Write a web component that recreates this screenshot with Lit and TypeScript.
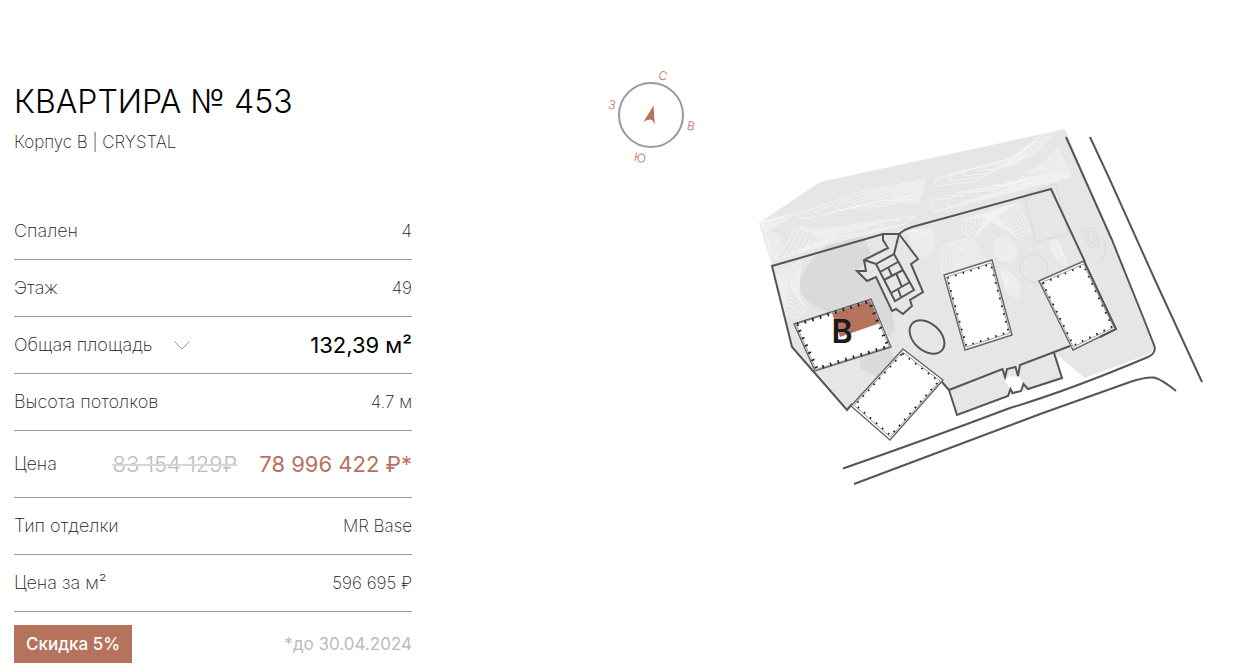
import { LitElement, html, svg, css } from "lit";
import { customElement, state } from "lit/decorators.js";

type Pt = [number, number];

const pts = (list: Pt[]) => list.map(([x, y]) => `${x.toFixed(1)},${y.toFixed(1)}`).join(" ");

/** Moves every point of an outline toward a focus by the given share. */
const toward = (list: Pt[], [fx, fy]: Pt, k: number): Pt[] =>
  list.map(([x, y]) => [fx + (x - fx) * k, fy + (y - fy) * k]);

/** Moves every point of a convex outline inwards by about d pixels. */
const inset = (list: Pt[], d: number): Pt[] => {
  const cx = list.reduce((s, p) => s + p[0], 0) / list.length;
  const cy = list.reduce((s, p) => s + p[1], 0) / list.length;
  return list.map(([x, y]) => {
    const len = Math.hypot(x - cx, y - cy);
    return [x - ((x - cx) / len) * d, y - ((y - cy) / len) * d];
  });
};

const BUILDING_B: Pt[] = [[794, 324], [871, 299], [891, 347], [815, 371]];
const BUILDINGS: Pt[][] = [
  [[903, 349], [943, 380], [890, 440], [851, 406]],
  [[944, 275], [992, 260], [1012, 335], [965, 350]],
  [[1039, 281], [1084, 261], [1116, 329], [1073, 350]],
];

const CONTOURS: { line: Pt[]; focus: Pt; rings: number }[] = [
  { line: [[935, 180], [955, 173], [1003, 162], [1022, 150], [1042, 135], [1054, 133], [1041, 148], [1030, 157], [1022, 158], [1015, 165], [995, 169], [975, 182], [960, 183], [936, 186]], focus: [1020, 156], rings: 6 },
  { line: [[931, 199], [950, 199], [960, 192], [990, 191], [1020, 180], [1026, 172], [1040, 166], [1058, 147], [1071, 177], [933, 212]], focus: [1054, 172], rings: 8 },
  { line: [[795, 215], [860, 192], [926, 179], [918, 203], [900, 202], [875, 208], [850, 208], [805, 219]], focus: [912, 193], rings: 6 },
  { line: [[760, 222], [795, 213], [788, 219], [764, 232]], focus: [765, 224], rings: 5 },
  { line: [[783, 250], [795, 227], [820, 230], [852, 225], [915, 216], [905, 224], [860, 236], [812, 249], [775, 260]], focus: [822, 239], rings: 6 },
  { line: [[764, 230], [778, 235], [783, 247], [771, 263]], focus: [772, 246], rings: 5 },
  { line: [[776, 272], [801, 262], [798, 295], [806, 309], [797, 318], [785, 314]], focus: [789, 284], rings: 7 },
  { line: [[908, 231], [934, 228], [933, 247], [925, 258], [915, 252]], focus: [922, 239], rings: 6 },
  { line: [[944, 245], [965, 239], [975, 242], [980, 252], [990, 266], [944, 278], [939, 258]], focus: [962, 255], rings: 7 },
  { line: [[962, 220], [1018, 203], [1030, 232], [1018, 238], [1008, 231], [986, 218], [974, 239], [962, 232]], focus: [996, 216], rings: 8 },
  { line: [[995, 240], [1008, 238], [1017, 251], [1013, 261], [1000, 261], [995, 252]], focus: [1006, 252], rings: 6 },
  { line: [[1000, 268], [1005, 267], [1020, 284], [1018, 298], [1007, 293]], focus: [1010, 282], rings: 6 },
  { line: [[1050, 241], [1057, 239], [1066, 259], [1067, 265], [1058, 262], [1051, 250]], focus: [1058, 252], rings: 5 },
];

@customElement("compass-rose")
class CompassRose extends LitElement {
  static styles = css`
    :host { display: block; }
    svg { display: block; width: 100%; height: auto; }
    .ring { fill: none; stroke: #999; stroke-width: 2; }
    .needle { fill: #b5725c; }
    text { fill: #b5725c; font: 300 12px Inter, sans-serif; text-anchor: middle; }
  `;
  render() {
    return html`
      <svg viewBox="604 66 96 102" role="img" aria-label="Стороны света">
        <circle class="ring" cx="651" cy="115" r="32"></circle>
        <path class="needle" d="M653.5 105.5 654.8 125.3Q653.5 120 650.3 119.5 646 119.5 643.3 122.3Z"></path>
        <text transform="translate(662 80) rotate(12)">С</text>
        <text transform="translate(611 109) rotate(12)">З</text>
        <text transform="translate(690 130) rotate(12)">В</text>
        <text transform="translate(639 162) rotate(12)">Ю</text>
      </svg>`;
  }
}

@customElement("site-plan")
class SitePlan extends LitElement {
  static styles = css`
    :host { display: block; }
    svg { display: block; width: 100%; height: auto; }
    .ground { fill: #e6e6e6; }
    .shade { fill: #dadada; }
    .contour { fill: none; stroke: #f4f4f4; stroke-width: 0.9; stroke-linejoin: round; }
    .court { fill: none; stroke: #dadada; stroke-width: 1; }
    .line { fill: none; stroke: #555; stroke-width: 2; stroke-linejoin: miter; }
    .road { fill: none; stroke: #555; stroke-width: 2; }
    .house { fill: #fff; stroke: #666; stroke-width: 1.4; }
    .wall { fill: none; stroke: #888; stroke-width: 0.8; }
    .teeth { fill: none; stroke: #222; stroke-width: 1.8; stroke-dasharray: 1.6 6.4; }
    .teeth.strong { stroke-dasharray: 1.6 6.4; stroke-width: 3.4; }
    .flat { fill: #b5725c; }
    .clear { fill: #fff; }
    text { fill: #1a1a1a; font: 600 32px Inter, sans-serif; text-anchor: middle; }
  `;
  render() {
    return html`
      <svg viewBox="755 125 450 362" role="img" aria-label="План участка, корпус B">
        <path class="ground" d="M759 223 820 182 1065 129 1112 240 1141 314 1153 345Q1154 352 1147 355L1085 378 1057 355 1062 378 957 414 949 390 942 382 890 430 850 405 847 410 792 347 772 266Z"></path>
        <path class="shade" d="M829 242 862 231 871 254 864 261 858 271 867 281 876 279 892 312 895 330 889 337 871 299 827 312 811 304 801 294 800 280 806 267Z"></path>
        <path class="shade" d="M860 352 889 347 895 358 878 378 860 368Z"></path>
        ${CONTOURS.map(({ line, focus, rings }) =>
          Array.from({ length: rings }, (_, i) =>
            svg`<polygon class="contour" points=${pts(toward(line, focus, 1 - i / rings))}></polygon>`))}
        <path class="court" d="M1024 195 1056 184 1069 234 1036 242ZM1083 230 1093 227 1100 244 1090 248ZM1087 233 1092 231 1096 242 1091 244ZM1100 262Q1110 250 1103 238"></path>
        <circle class="court" cx="1034" cy="268" r="14"></circle>
        <path class="clear" d="M1004 380 1010 376 1019 377 1023 383 1021 391 1012 393 1009 387Z"></path>
        <path class="clear" d="M903 349 890 440 942 381Z"></path>

        <path class="line" d="M852 404 847 410 792 347 772 266 883 234H899Q905 229 912 227L1051 189 1085 262"></path>
        <path class="line" d="M883 234V240L888 248 864 260 866 271H857L867 281 876 277 892 311 896 309 903 314 912 306 910 300 923 292 911 264 918 259 899 234"></path>
        <path class="line" d="M864 260 876 264 894 254 899 234M876 264 895 301 914 290 894 254M880 272 898 262M884 280 903 270M891 293 910 282M888 267 892 276M896 273 902 287M898 289 901 297"></path>
        <ellipse class="line" cx="927" cy="337" rx="20" ry="13.5" transform="rotate(42 927 337)"></ellipse>
        <path class="line" d="M1070 346 1020 365 1018 376 1015.500 367 1007 369 1005 377 1002.500 369 949 390 942 382"></path>
        <path class="line" d="M949 390 957 415 1008 396 1010.500 389 1012.500 393 1021 391 1023.500 384 1028 389 1062 378 1054 353"></path>

        ${BUILDINGS.map((b) => svg`
          <polygon class="house" points=${pts(b)}></polygon>
          <polygon class="wall" points=${pts(inset(b, 3))}></polygon>
          <polygon class="teeth" points=${pts(inset(b, 4.5))}></polygon>`)}
        <path class="line" d="M1084 261 1116 329 1100 337"></path>

        <polygon class="house" points=${pts(BUILDING_B)}></polygon>
        <path class="flat" d="M832 313 870.500 300.500 880 323 840 337Z"></path>
        <polygon class="wall" points=${pts(inset(BUILDING_B, 2))}></polygon>
        <polygon class="teeth strong" points=${pts(inset(BUILDING_B, 3))}></polygon>
        <text x="842" y="343">B</text>

        <path class="road" d="M1066 137 1112 240 1143 317 1154 345Q1157 353 1148 357 1070 390 1010 408 925 440 843 468.500"></path>
        <path class="road" d="M854 484 1043 413 1130 382Q1145 377 1153 377.500 1160 378 1176 391"></path>
        <path class="road" d="M1090 137 1110 180 1155 280 1202 382"></path>
      </svg>`;
  }
}

@customElement("app-root")
class AppRoot extends LitElement {
  static styles = css`
    :host {
      display: block;
      background: #fff;
      color: #222;
      font: 200 17px/24px Inter, sans-serif;
    }
    main { display: flex; align-items: flex-start; padding: 66px 31px 0 14px; }
    .details { flex: 0 1 398px; padding-top: 16px; }
    h1 { margin: 0; color: #000; font-size: 32px; line-height: 40px; font-weight: 300; white-space: nowrap; }
    .building { margin: 8px 0 49px; }
    dl { margin: 0; }
    .row {
      display: flex;
      align-items: center;
      justify-content: space-between;
      padding: 16px 0;
      border-bottom: 1px solid #999;
      white-space: nowrap;
    }
    .row.price { padding: 21px 0; }
    dt { display: flex; align-items: center; gap: 22px; font-size: 18px; }
    dd { margin: 0; display: flex; gap: 22px; }
    .area { color: #000; font-size: 22px; font-weight: 400; }
    .old { color: #bbb; font-size: 22px; font-weight: 300; text-decoration-thickness: 2px; text-decoration-color: #d6d6d6; }
    .new { color: #b5725c; font-size: 22px; font-weight: 400; }
    button { display: flex; padding: 4px 0; border: 0; background: none; cursor: pointer; }
    button svg { width: 16px; height: 9px; fill: none; stroke: #999; }
    .promo { display: flex; align-items: center; justify-content: space-between; margin-top: 13px; }
    .badge { padding: 7px 12px; background: #b5725c; color: #fff; font-weight: 500; }
    .until { color: #bbb; font-weight: 400; }
    .scheme { display: flex; flex: 1 1 0; justify-content: flex-end; align-items: flex-start; gap: 55px; min-width: 0; }
    compass-rose { flex: 0 0 96px; }
    site-plan { flex: 0 1 450px; margin-top: 59px; }
  `;

  @state() private open = false;

  render() {
    return html`
      <main>
        <section class="details">
          <h1>КВАРТИРА № 453</h1>
          <p class="building">Корпус B | CRYSTAL</p>
          <dl>
            <div class="row"><dt>Спален</dt><dd>4</dd></div>
            <div class="row"><dt>Этаж</dt><dd>49</dd></div>
            <div class="row">
              <dt>Общая площадь
                <button type="button" aria-label="Состав площади" aria-expanded=${this.open ? "true" : "false"}
                  @click=${() => (this.open = !this.open)}>
                  <svg viewBox="0 0 16 9"><path d="M.5 .5 8 8 15.500 .5"></path></svg>
                </button>
              </dt>
              <dd class="area">132,39 м²</dd>
            </div>
            <div class="row"><dt>Высота потолков</dt><dd>4.7 м</dd></div>
            <div class="row price">
              <dt>Цена</dt>
              <dd><s class="old">83 154 129₽</s><span class="new">78 996 422 ₽*</span></dd>
            </div>
            <div class="row"><dt>Тип отделки</dt><dd>MR Base</dd></div>
            <div class="row"><dt>Цена за м²</dt><dd>596 695 ₽</dd></div>
          </dl>
          <div class="promo">
            <span class="badge">Скидка 5%</span>
            <span class="until">*до 30.04.2024</span>
          </div>
        </section>
        <section class="scheme">
          <compass-rose></compass-rose>
          <site-plan></site-plan>
        </section>
      </main>`;
  }
}
